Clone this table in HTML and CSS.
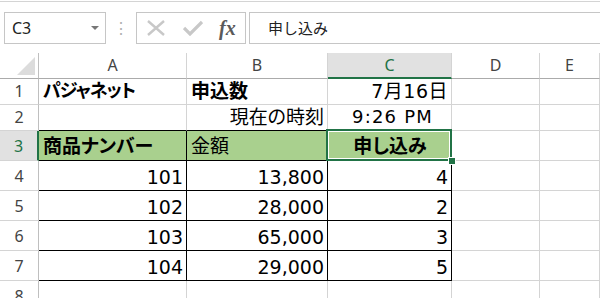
FILE: index.html
```html
<!DOCTYPE html>
<html>
<head>
  <title>Book1 - Excel</title>
  <link rel="stylesheet" href="styles.css">
</head>
<body>
  <div class="formula-bar">
    <div class="name-box">
      <span>C3</span>
      <span class="caret"></span>
    </div>
    <div class="grip">&#8942;</div>
    <div class="fx-buttons">
      <svg class="btn-icon" width="20" height="16" viewBox="0 0 20 16">
        <path d="M2 1 L18 15 M18 1 L2 15" stroke="#c8c8c8" stroke-width="2.4" fill="none"/>
      </svg>
      <svg class="btn-icon" width="20" height="16" viewBox="0 0 20 16">
        <path d="M1 8 L7 14 L19 2" stroke="#c8c8c8" stroke-width="3.2" fill="none"/>
      </svg>
      <span class="fx">fx</span>
    </div>
    <div class="formula-input">申し込み</div>
  </div>

  <div class="sheet">
    <!-- column headers -->
    <div class="corner"><span class="corner-tri"></span></div>
    <div class="col-head">A</div>
    <div class="col-head">B</div>
    <div class="col-head active">C</div>
    <div class="col-head">D</div>
    <div class="col-head">E</div>

    <!-- row 1 -->
    <div class="row-head">1</div>
    <div class="cell bold narrow">パジャネット</div>
    <div class="cell bold">申込数</div>
    <div class="cell right date">7月16日</div>
    <div class="cell"></div>
    <div class="cell"></div>

    <!-- row 2 -->
    <div class="row-head">2</div>
    <div class="cell above-box"></div>
    <div class="cell right above-box">現在の時刻</div>
    <div class="cell above-box time">9:26 PM</div>
    <div class="cell"></div>
    <div class="cell"></div>

    <!-- row 3 -->
    <div class="row-head tall active">3</div>
    <div class="cell tall boxed green bold">商品ナンバー</div>
    <div class="cell tall boxed green">金額</div>
    <div class="cell tall boxed green bold center selected">申し込み</div>
    <div class="cell tall"></div>
    <div class="cell tall"></div>

    <!-- rows 4-7 -->
    <div class="row-head tall">4</div>
    <div class="cell tall boxed right num">101</div>
    <div class="cell tall boxed right num">13,800</div>
    <div class="cell tall boxed right num">4</div>
    <div class="cell tall"></div>
    <div class="cell tall"></div>

    <div class="row-head tall">5</div>
    <div class="cell tall boxed right num">102</div>
    <div class="cell tall boxed right num">28,000</div>
    <div class="cell tall boxed right num">2</div>
    <div class="cell tall"></div>
    <div class="cell tall"></div>

    <div class="row-head tall">6</div>
    <div class="cell tall boxed right num">103</div>
    <div class="cell tall boxed right num">65,000</div>
    <div class="cell tall boxed right num">3</div>
    <div class="cell tall"></div>
    <div class="cell tall"></div>

    <div class="row-head tall">7</div>
    <div class="cell tall boxed right num">104</div>
    <div class="cell tall boxed right num">29,000</div>
    <div class="cell tall boxed right num">5</div>
    <div class="cell tall"></div>
    <div class="cell tall"></div>

    <div class="row-head tall">8</div>
    <div class="cell tall"></div>
    <div class="cell tall"></div>
    <div class="cell tall"></div>
    <div class="cell tall"></div>
    <div class="cell tall"></div>
  </div>
</body>
</html>
```

FILE: styles.css
```css
body {
  margin: 0;
  padding: 0;
  width: 600px;
  height: 298px;
  overflow: hidden;
  background: #fff;
  font-family: "Noto Sans", "Noto Sans CJK JP", sans-serif;
  color: #222;
}

/* formula bar */
.formula-bar {
  margin-top: 1px;
  border-top: 1px solid #d4d4d4;
  height: 52px;
  display: flex;
  align-items: flex-start;
  padding-top: 10px;
  box-sizing: border-box;
}
.name-box {
  margin-left: 4px;
  width: 102px;
  height: 32px;
  box-sizing: border-box;
  border: 1px solid #c6c6c6;
  display: flex;
  align-items: center;
  justify-content: space-between;
  padding: 0 6px 0 7px;
  font-size: 16px;
  color: #222;
}
.caret {
  width: 0;
  height: 0;
  border-left: 4px solid transparent;
  border-right: 4px solid transparent;
  border-top: 4px solid #777;
}
.grip {
  width: 30px;
  text-align: center;
  color: #b0b0b0;
  font-size: 16px;
  line-height: 32px;
}
.fx-buttons {
  width: 110px;
  height: 32px;
  box-sizing: border-box;
  border: 1px solid #c6c6c6;
  display: flex;
  align-items: center;
  padding-left: 9px;
  gap: 17px;
}
.fx {
  font-family: "Liberation Serif", serif;
  font-style: italic;
  font-weight: bold;
  font-size: 20px;
  color: #5a5a5a;
  margin-left: -1px;
}
.formula-input {
  flex: 1;
  margin-left: 3px;
  height: 32px;
  box-sizing: border-box;
  border: 1px solid #c6c6c6;
  border-right: none;
  padding-left: 18px;
  line-height: 30px;
  font-size: 15px;
  font-family: "Noto Sans CJK JP", sans-serif;
  color: #222;
}

/* worksheet grid */
.sheet {
  display: grid;
  grid-template-columns: 39px 148px 141px 124px 88px 1fr;
  grid-template-rows: 26px 26px 26px repeat(6, 30px);
}
.corner,
.col-head,
.row-head,
.cell {
  box-sizing: border-box;
  border-right: 1px solid #d4d4d4;
  border-bottom: 1px solid #d4d4d4;
}
.corner {
  position: relative;
  border-right-color: #bfbfbf;
  border-bottom-color: #ababab;
}
.corner-tri {
  position: absolute;
  right: 3px;
  bottom: 3px;
  width: 18px;
  height: 18px;
  background: #dcdcdc;
  clip-path: polygon(100% 0, 100% 100%, 0 100%);
}
.col-head {
  border-bottom-color: #ababab;
  text-align: center;
  font-size: 16px;
  line-height: 25px;
  color: #444;
}
.col-head.active {
  background: #e1e1e1;
  color: #217346;
  border-bottom: 2px solid #217346;
  line-height: 24px;
}
.row-head {
  border-right-color: #bfbfbf;
  text-align: center;
  font-size: 16px;
  line-height: 25px;
  color: #444;
}
.row-head.tall {
  line-height: 31px;
}
.row-head.active {
  background: #e1e1e1;
  color: #217346;
  border-right: 2px solid #217346;
}

.cell {
  font-family: "DejaVu Sans", "Noto Sans CJK JP", sans-serif;
  font-feature-settings: "palt";
  font-size: 19px;
  line-height: 24px;
  padding: 0 3px 0 4px;
  white-space: nowrap;
  color: #000;
}
.cell.tall {
  line-height: 30px;
}
.cell.bold {
  font-weight: bold;
}
.cell.narrow {
  font-size: 18px;
  letter-spacing: -1px;
}
.cell.right {
  text-align: right;
}
.cell.center {
  text-align: center;
}
.cell.date {
  letter-spacing: 0.5px;
}
.cell.time {
  padding-left: 24px;
  font-size: 18px;
  letter-spacing: 1.2px;
}
.cell.num {
  font-size: 19px;
  line-height: 32px;
}
.cell.above-box {
  border-bottom-color: #000;
}
.cell.boxed {
  border-right-color: #000;
  border-bottom-color: #000;
}
.cell.green {
  background: #a9d08e;
}

/* active cell frame and fill handle */
.cell.selected {
  position: relative;
}
.cell.selected::after {
  content: "";
  position: absolute;
  left: -2px;
  top: -2px;
  right: -1px;
  bottom: -1px;
  border: 2px solid #217346;
  box-shadow: inset 0 0 0 1px #fff;
}
.cell.selected::before {
  content: "";
  position: absolute;
  right: -5px;
  bottom: -5px;
  width: 6px;
  height: 6px;
  background: #217346;
  border: 1px solid #fff;
  z-index: 1;
}
```
